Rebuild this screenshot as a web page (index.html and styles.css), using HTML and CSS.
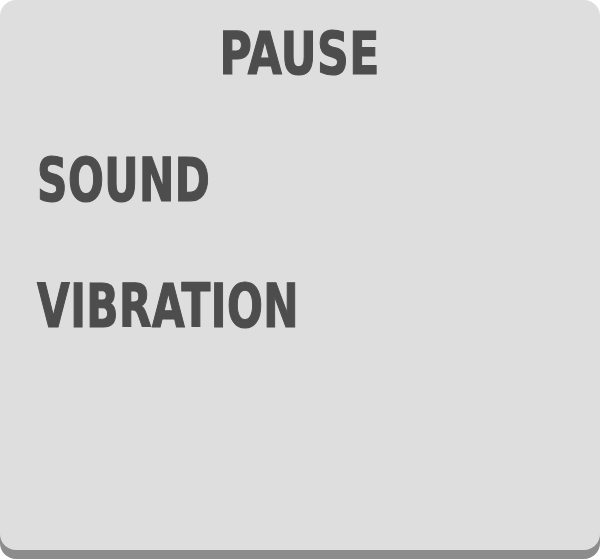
FILE: index.html
```html
<!DOCTYPE html>
<html lang="en">

<head>
    <meta charset="UTF-8">
    <meta name="viewport" content="width=device-width, initial-scale=1.0">
    <title>Pause</title>
    <link rel="stylesheet" href="styles.css">
</head>

<body>
    <div class="panel">
        <h1 class="title"><span>PAUSE</span></h1>
        <div class="option"><span>SOUND</span></div>
        <div class="option"><span>VIBRATION</span></div>
    </div>
</body>

</html>
```

FILE: styles.css
```css
body {
    margin: 0;
    padding-bottom: 10px;
    background-color: #ffffff;
    font-family: "DejaVu Sans Condensed", "DejaVu Sans", sans-serif;
    font-weight: bold;
    color: #4d4d4d;
}

.panel {
    width: 600px;
    height: 550px;
    background: #dedede;
    border-radius: 16px;
    box-shadow: 0 9px 0 #8c8c8c;
    padding: 16px 37px 0;
    box-sizing: border-box;
}

.title {
    margin: 0;
    font-size: 59px;
    line-height: 76px;
    text-align: center;
}

.title span,
.option span {
    display: inline-block;
    letter-spacing: 0.6px;
    -webkit-text-stroke: 1.2px #4d4d4d;
}

.title span {
    transform: scaleX(0.83);
}

.option {
    font-size: 61px;
    line-height: 76px;
    margin-top: 50px;
}

.option span {
    transform: scaleX(0.77);
    transform-origin: left center;
}
```
